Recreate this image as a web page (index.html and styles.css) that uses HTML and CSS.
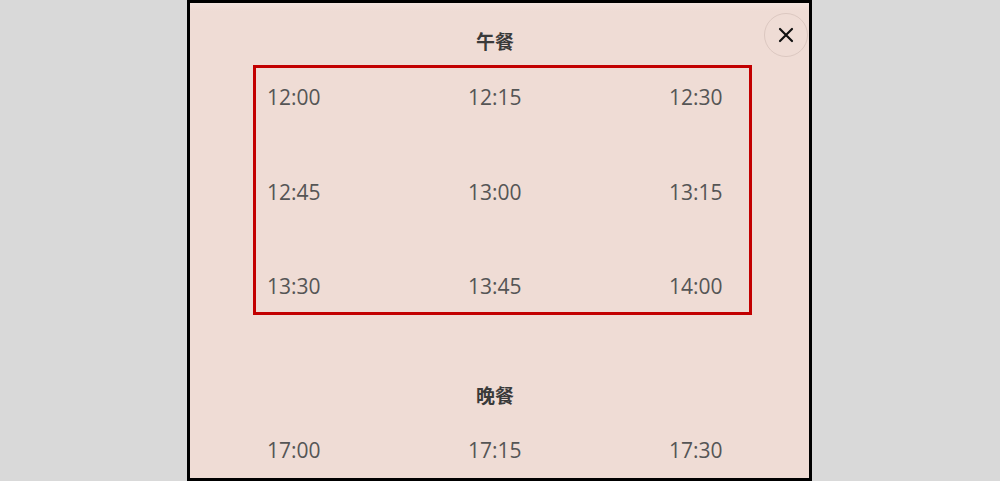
FILE: index.html
```html
<!DOCTYPE html>
<html lang="zh">
<head>
<meta charset="utf-8">
<title>选择时间</title>
<link rel="stylesheet" href="styles.css">
</head>
<body>
<div class="modal">
  <button class="close" aria-label="关闭">
    <svg width="16" height="16" viewBox="0 0 16 16"><path d="M2 2 L14 14 M14 2 L2 14" stroke="#111" stroke-width="2.2" stroke-linecap="round" fill="none"/></svg>
  </button>
  <h2 class="meal">午餐</h2>
  <div class="slots selected">
    <span class="slot">12:00</span><span class="slot">12:15</span><span class="slot">12:30</span>
    <span class="slot">12:45</span><span class="slot">13:00</span><span class="slot">13:15</span>
    <span class="slot">13:30</span><span class="slot">13:45</span><span class="slot">14:00</span>
  </div>
  <h2 class="meal dinner">晚餐</h2>
  <div class="slots">
    <span class="slot">17:00</span><span class="slot">17:15</span><span class="slot">17:30</span>
  </div>
</div>
</body>
</html>
```
FILE: styles.css
```css
html, body {
  margin: 0;
  padding: 0;
  height: 100%;
  overflow: hidden;
}
body {
  background: #d9d9d9;
  font-family: "Open Sans", "Noto Sans", "Noto Sans CJK SC", sans-serif;
}
.modal {
  position: relative;
  box-sizing: border-box;
  margin-left: 187px;
  width: 625px;
  height: 481px;
  border: 3px solid #000;
  background: #efdcd5;
  background-image: linear-gradient(#f3e4df, #efdcd5 8px);
  overflow: hidden;
}
.close {
  position: absolute;
  top: 10px;
  right: 1px;
  width: 44px;
  height: 44px;
  border-radius: 50%;
  border: 1px solid #dcc8c1;
  background: transparent;
  padding: 0;
  display: flex;
  align-items: center;
  justify-content: center;
  cursor: pointer;
}
.meal {
  margin: 24px 0 10px 0;
  padding-right: 9px;
  height: 28px;
  line-height: 28px;
  text-align: center;
  font-family: "Noto Sans CJK SC", "Noto Sans", sans-serif;
  font-weight: 700;
  font-size: 19px;
  color: #3a3a3a;
}
.meal.dinner {
  margin-top: 65.5px;
  margin-bottom: 9px;
}
.slots {
  box-sizing: border-box;
  margin-left: 63px;
  width: 499px;
  border: 3px solid transparent;
  padding: 1px 0 0 11px;
  display: grid;
  grid-template-columns: 201px 201px auto;
  row-gap: 40.5px;
}
.slots.selected {
  border-color: #c20000;
}
.slot {
  box-sizing: border-box;
  height: 54px;
  padding-top: 2px;
  line-height: 52px;
  font-size: 21px;
  color: #555;
}
```
